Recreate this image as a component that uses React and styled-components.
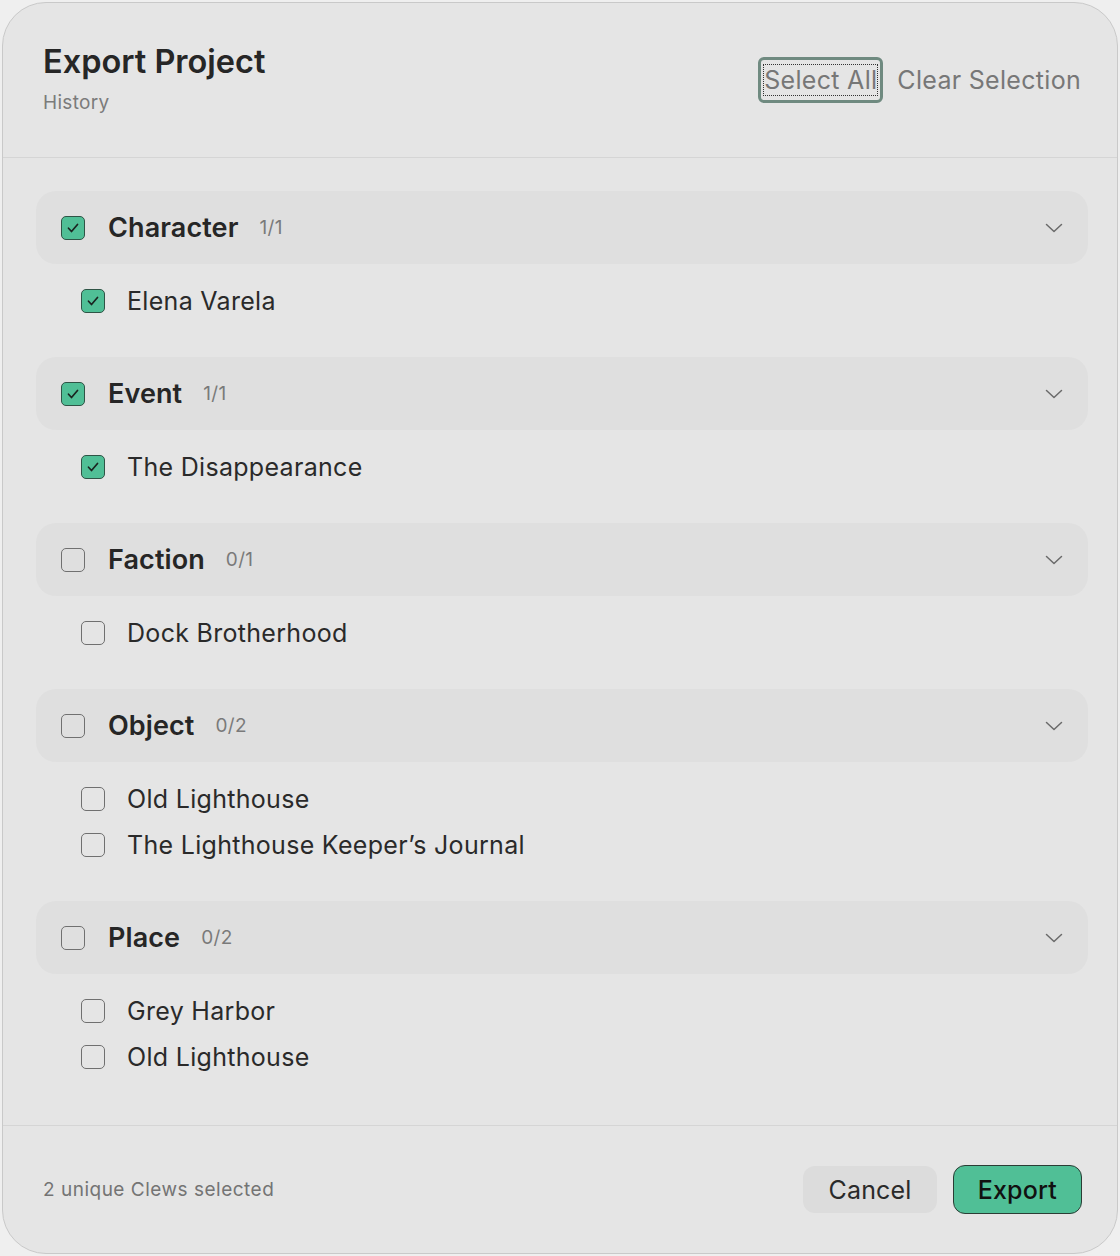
import React, { useState } from 'react'
import styled, { createGlobalStyle } from 'styled-components'

const Global = createGlobalStyle`
  html, body {
    margin: 0;
    padding: 0;
    background: #efefef;
  }
  body {
    font-family: Inter, "Noto Sans", "Liberation Sans", sans-serif;
    -webkit-font-smoothing: antialiased;
  }
`

const Dialog = styled.div`
  box-sizing: border-box;
  margin: 2px;
  height: 1252px;
  display: flex;
  flex-direction: column;
  background: #e5e5e5;
  border: 1px solid #c9c9c9;
  border-radius: 44px;
  overflow: hidden;
`

const Header = styled.header`
  box-sizing: border-box;
  height: 155px;
  flex-shrink: 0;
  display: flex;
  justify-content: space-between;
  align-items: flex-start;
  padding: 38px 30px 0 40px;
  border-bottom: 1px solid #d5d5d5;
`

const TitleBlock = styled.div`
  display: flex;
  flex-direction: column;
  gap: 8px;
`

const Title = styled.h1`
  margin: 0;
  font-size: 32.5px;
  font-weight: 600;
  color: #262626;
  line-height: 42px;
`

const Subtitle = styled.div`
  font-size: 19px;
  letter-spacing: 0.3px;
  color: #7b7b7b;
  line-height: 24px;
`

const HeaderActions = styled.div`
  display: flex;
  align-items: center;
  gap: 8px;
  margin-top: 16px;
`

const LinkButton = styled.button`
  box-sizing: border-box;
  height: 46px;
  padding: 0 3px;
  border: 3px solid ${p => p.focused ? '#6f8a80' : 'transparent'};
  border-radius: 6px;
  background: transparent;
  font-family: inherit;
  font-size: 25px;
  letter-spacing: 0.3px;
  color: #777;
  cursor: pointer;

  span {
    outline: ${p => p.focused ? '1px dotted #333' : 'none'};
    outline-offset: 0;
  }
`

const Body = styled.div`
  flex: 1;
  padding: 33px 29px 0 33px;
  display: flex;
  flex-direction: column;
  gap: 33px;
`

const Group = styled.section`
  display: flex;
  flex-direction: column;
`

const GroupHeader = styled.div`
  box-sizing: border-box;
  height: 73px;
  display: flex;
  align-items: center;
  padding: 0 25px;
  background: #dfdfdf;
  border-radius: 20px;
  cursor: pointer;
`

const GroupTitle = styled.span`
  margin-left: 23px;
  font-size: 27px;
  font-weight: 600;
  letter-spacing: 0.1px;
  color: #262626;
`

const Count = styled.span`
  margin-left: 21px;
  font-size: 19px;
  letter-spacing: 0.3px;
  color: #7a7a7a;
`

const Chevron = styled.svg`
  margin-left: auto;
  width: 18px;
  height: 10px;
`

const Items = styled.div`
  display: flex;
  flex-direction: column;
  padding-top: 14px;
`

const Item = styled.label`
  height: 46px;
  display: flex;
  align-items: center;
  padding-left: 45px;
  cursor: pointer;
`

const ItemName = styled.span`
  margin-left: 22px;
  font-size: 25px;
  letter-spacing: 0.3px;
  color: #2a2a2a;
`

const Box = styled.span`
  box-sizing: border-box;
  width: 24px;
  height: 24px;
  flex-shrink: 0;
  display: flex;
  align-items: center;
  justify-content: center;
  border-radius: 5px;
  border: 1.5px solid ${p => p.checked ? '#2f5446' : '#707070'};
  background: ${p => p.checked ? '#50bf96' : 'transparent'};
`

const Footer = styled.footer`
  box-sizing: border-box;
  height: 128px;
  flex-shrink: 0;
  display: flex;
  align-items: center;
  padding: 0 35px 0 40px;
  border-top: 1px solid #d5d5d5;
`

const Status = styled.div`
  font-size: 19px;
  letter-spacing: 0.5px;
  color: #747474;
`

const Actions = styled.div`
  margin-left: auto;
  display: flex;
  gap: 16px;
  align-items: center;
`

const Button = styled.button`
  box-sizing: border-box;
  height: ${p => p.primary ? '49px' : '47px'};
  padding: 0 24px;
  border-radius: 12px;
  border: 1px solid ${p => p.primary ? '#2b3d35' : 'transparent'};
  background: ${p => p.primary ? '#50bf96' : '#dcdcdc'};
  font-family: inherit;
  font-size: 25px;
  letter-spacing: 0.2px;
  font-weight: ${p => p.primary ? 500 : 400};
  color: ${p => p.primary ? '#111' : '#2a2a2a'};
  cursor: pointer;
`

const Check = ({ checked }) => (
  <Box checked={checked}>
    {checked && (
      <svg width='16' height='16' viewBox='0 0 16 16' fill='none'>
        <path d='M3.5 8.2l3 3.3L12.5 4.5' stroke='#1a2420' strokeWidth='1.7' strokeLinecap='round' strokeLinejoin='round' />
      </svg>
    )}
  </Box>
)

const groups = [
  { name: 'Character', items: [{ name: 'Elena Varela', on: true }] },
  { name: 'Event', items: [{ name: 'The Disappearance', on: true }] },
  { name: 'Faction', items: [{ name: 'Dock Brotherhood', on: false }] },
  {
    name: 'Object',
    items: [
      { name: 'Old Lighthouse', on: false },
      { name: 'The Lighthouse Keeper\u2019s Journal', on: false }
    ]
  },
  {
    name: 'Place',
    items: [
      { name: 'Grey Harbor', on: false },
      { name: 'Old Lighthouse', on: false }
    ]
  }
]

export default function App () {
  const [data] = useState(groups)
  const selected = data.reduce((n, g) => n + g.items.filter(i => i.on).length, 0)

  return (
    <>
      <Global />
      <Dialog>
        <Header>
          <TitleBlock>
            <Title>Export Project</Title>
            <Subtitle>History</Subtitle>
          </TitleBlock>
          <HeaderActions>
            <LinkButton focused><span>Select All</span></LinkButton>
            <LinkButton><span>Clear Selection</span></LinkButton>
          </HeaderActions>
        </Header>

        <Body>
          {data.map(g => {
            const on = g.items.filter(i => i.on).length
            return (
              <Group key={g.name}>
                <GroupHeader>
                  <Check checked={on === g.items.length} />
                  <GroupTitle>{g.name}</GroupTitle>
                  <Count>{on}/{g.items.length}</Count>
                  <Chevron viewBox='0 0 18 10' fill='none'>
                    <path d='M1.5 1.5L9 8.5l7.5-7' stroke='#6a6a6a' strokeWidth='1.5' strokeLinecap='round' strokeLinejoin='round' />
                  </Chevron>
                </GroupHeader>
                <Items>
                  {g.items.map((item, i) => (
                    <Item key={i}>
                      <Check checked={item.on} />
                      <ItemName>{item.name}</ItemName>
                    </Item>
                  ))}
                </Items>
              </Group>
            )
          })}
        </Body>

        <Footer>
          <Status>{selected} unique Clews selected</Status>
          <Actions>
            <Button>Cancel</Button>
            <Button primary>Export</Button>
          </Actions>
        </Footer>
      </Dialog>
    </>
  )
}
